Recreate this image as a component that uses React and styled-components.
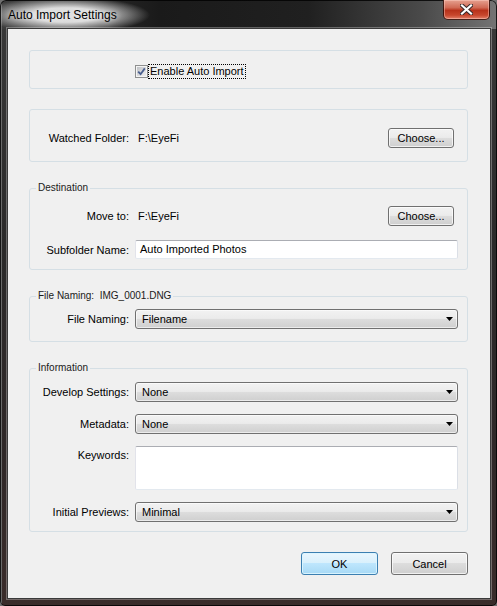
import React from "react";
import styled, { createGlobalStyle } from "styled-components";

const Global = createGlobalStyle`
  html, body { margin: 0; padding: 0; background: #6f6f6f; }
  body { font-family: "Liberation Sans", Arial, sans-serif; }
  #root { width: 497px; height: 606px; }
  * { box-sizing: border-box; }
`;

const Window = styled.div`
  width: 497px;
  height: 606px;
  display: flex;
  flex-direction: column;
  padding: 0 6px 7px 7px;
  border-radius: 6px 6px 5px 5px;
  background:
    radial-gradient(ellipse 84px 18px at 66px 15px, rgba(226, 226, 226, 0.97) 40%, rgba(226, 226, 226, 0) 100%),
    linear-gradient(to right, #6a6a6a 0, #6a6a6a 2px, rgba(0, 0, 0, 0) 2px),
    linear-gradient(to right, #3e3e3e 0%, #1a1a1a 32%, #202020 62%, #4a4a4a 85%, #747474 100%) 0 0 / 100% 29px no-repeat,
    linear-gradient(to bottom, #3a3a3a 0%, #2b2a2a 40%, #2f2828 75%, #3a2c2a 100%);
  box-shadow: inset 0 0 0 1px rgba(0, 0, 0, 0.8);
`;

const TitleBar = styled.div`
  height: 28px;
  flex: none;
  display: flex;
  justify-content: space-between;
  align-items: flex-start;
`;

const TitleText = styled.div`
  margin: 8px 0 0 1px;
  font-size: 12px;
  line-height: 14px;
  color: #000;
  text-shadow: 0 0 6px rgba(255, 255, 255, 0.8);
`;

const CloseButton = styled.div`
  width: 47px;
  height: 20px;
  margin-right: 1px;
  display: flex;
  align-items: center;
  justify-content: center;
  border: 1px solid rgba(40, 10, 5, 0.85);
  border-top: none;
  border-radius: 0 0 5px 5px;
  background: linear-gradient(#e6a190 0%, #d06a55 40%, #b8321b 55%, #c8472d 80%, #e3806a 100%);
  box-shadow: inset 0 0 0 1px rgba(255, 210, 200, 0.45);
`;

const Client = styled.div`
  flex: 1;
  display: flex;
  flex-direction: column;
  gap: 20px;
  padding: 21px 22px 0 21px;
  background: #f0f0f0;
  border: 1px solid #3a3a3a;
  box-shadow: 0 0 0 1px rgba(255, 255, 255, 0.3);
`;

const Group = styled.fieldset`
  margin: 0;
  padding: 0;
  min-width: 0;
  border: 1px solid #d5dfe5;
  border-radius: 3px;
`;

const Legend = styled.legend`
  margin-left: 6px;
  padding: 0 2px;
  font-size: 10px;
  line-height: 12px;
  color: #1a1a1a;
`;

const Body = styled.div`
  display: flex;
  flex-direction: column;
  gap: ${(p) => p.$gap ?? 12}px;
  padding: ${(p) => p.$pt}px 9px ${(p) => p.$pb}px ${(p) => p.$pl ?? 0}px;
`;

const Row = styled.div`
  display: grid;
  grid-template-columns: 99px 1fr auto;
  column-gap: 6px;
  align-items: center;
  font-size: 11px;
  color: #000;
`;

const Label = styled.span`
  text-align: right;
  white-space: nowrap;
  align-self: ${(p) => (p.$top ? "start" : "center")};
  margin-top: ${(p) => (p.$top ? 3 : 0)}px;
`;

const Value = styled.span`
  padding-left: 3px;
`;

const PushButton = styled.button`
  width: ${(p) => p.$w}px;
  height: ${(p) => p.$h ?? 20}px;
  margin: 0 ${(p) => p.$mr ?? 0}px 0 0;
  padding: 0;
  font: 11px "Liberation Sans", Arial, sans-serif;
  color: #000;
  border: 1px solid ${(p) => (p.$default ? "#3c7fb1" : "#707070")};
  border-radius: 3px;
  background: ${(p) =>
    p.$default
      ? "linear-gradient(#eaf6fd 0%, #d9f0fc 47%, #bee6fd 50%, #a7d9f5 100%)"
      : "linear-gradient(#f2f2f2 0%, #ebebeb 47%, #dddddd 50%, #cfcfcf 100%)"};
  box-shadow: inset 0 0 0 1px ${(p) => (p.$default ? "rgba(220,245,255,0.9)" : "rgba(255,255,255,0.7)")};
`;

const Combo = styled.div`
  grid-column: 2 / 4;
  height: 20px;
  display: flex;
  align-items: center;
  justify-content: space-between;
  padding: 0 4px 0 6px;
  border: 1px solid #707070;
  border-radius: 3px;
  background: linear-gradient(#f2f2f2 0%, #ebebeb 47%, #dddddd 50%, #cfcfcf 100%);
  box-shadow: inset 0 0 0 1px rgba(255, 255, 255, 0.6);
`;

const TextField = styled.div`
  grid-column: 2 / 4;
  height: ${(p) => p.$h}px;
  padding: 3px 4px;
  background: #fff;
  border: 1px solid;
  border-color: #abadb3 #dbdfe6 #e3e9ef #e2e3ea;
  border-radius: 2px;
  line-height: 11px;
`;

const CheckRow = styled.label`
  display: flex;
  align-items: center;
  height: 15px;
  font-size: 11px;
  color: #000;
`;

const CheckBox = styled.span`
  width: 13px;
  height: 13px;
  display: inline-flex;
  align-items: center;
  justify-content: center;
  border: 1px solid #8e8f8f;
  background: linear-gradient(135deg, #b9bcc0 0%, #e4e4e6 70%, #efefef 100%);
  box-shadow: inset 0 0 0 1px #f4f4f4;
`;

const FocusText = styled.span`
  margin-left: 1px;
  padding: 0 1px;
  line-height: 13px;
  outline: 1px dotted #000;
  outline-offset: 0;
`;

const ButtonBar = styled.div`
  display: flex;
  justify-content: flex-end;
  gap: 13px;
`;

const Arrow = () => (
  <svg width="7" height="4" viewBox="0 0 7 4">
    <path d="M0 0h7L3.5 4z" fill="#000" />
  </svg>
);

const Select = ({ value }) => (
  <Combo>
    <span>{value}</span>
    <Arrow />
  </Combo>
);

export default function App() {
  return (
    <>
      <Global />
      <Window>
        <TitleBar>
          <TitleText>Auto Import Settings</TitleText>
          <CloseButton>
            <svg width="13" height="11" viewBox="0 0 13 11">
              <path d="M2 1.5L11 9.5M11 1.5L2 9.5" stroke="#3a2a2a" strokeWidth="4.2" strokeLinecap="square" />
              <path d="M2 1.5L11 9.5M11 1.5L2 9.5" stroke="#fff" strokeWidth="2.2" strokeLinecap="square" />
            </svg>
          </CloseButton>
        </TitleBar>
        <Client>
          <Group>
            <Body $pt={13} $pb={9} $pl={105}>
              <CheckRow>
                <CheckBox>
                  <svg width="9" height="9" viewBox="0 0 9 9">
                    <path d="M1.2 4.6L3.6 7.2L7.8 1.4" fill="none" stroke="#4a5f8f" strokeWidth="1.8" />
                  </svg>
                </CheckBox>
                <FocusText>Enable Auto Import</FocusText>
              </CheckRow>
            </Body>
          </Group>

          <Group>
            <Body $pt={18} $pb={13}>
              <Row>
                <Label>Watched Folder:</Label>
                <Value>F:\EyeFi</Value>
                <PushButton $w={66} $mr={4}>Choose...</PushButton>
              </Row>
            </Body>
          </Group>

          <Group>
            <Legend>Destination</Legend>
            <Body $pt={12} $pb={10} $gap={14}>
              <Row>
                <Label>Move to:</Label>
                <Value>F:\EyeFi</Value>
                <PushButton $w={66} $mr={4}>Choose...</PushButton>
              </Row>
              <Row>
                <Label>Subfolder Name:</Label>
                <TextField $h={19}>Auto Imported Photos</TextField>
              </Row>
            </Body>
          </Group>

          <Group>
            <Legend>File Naming:&nbsp;&nbsp;IMG_0001.DNG</Legend>
            <Body $pt={7} $pb={12}>
              <Row>
                <Label>File Naming:</Label>
                <Select value="Filename" />
              </Row>
            </Body>
          </Group>

          <Group>
            <Legend>Information</Legend>
            <Body $pt={8} $pb={9}>
              <Row>
                <Label>Develop Settings:</Label>
                <Select value="None" />
              </Row>
              <Row>
                <Label>Metadata:</Label>
                <Select value="None" />
              </Row>
              <Row>
                <Label $top>Keywords:</Label>
                <TextField $h={44} />
              </Row>
              <Row>
                <Label>Initial Previews:</Label>
                <Select value="Minimal" />
              </Row>
            </Body>
          </Group>

          <ButtonBar>
            <PushButton $w={77} $h={23} $default>OK</PushButton>
            <PushButton $w={77} $h={23}>Cancel</PushButton>
          </ButtonBar>
        </Client>
      </Window>
    </>
  );
}
